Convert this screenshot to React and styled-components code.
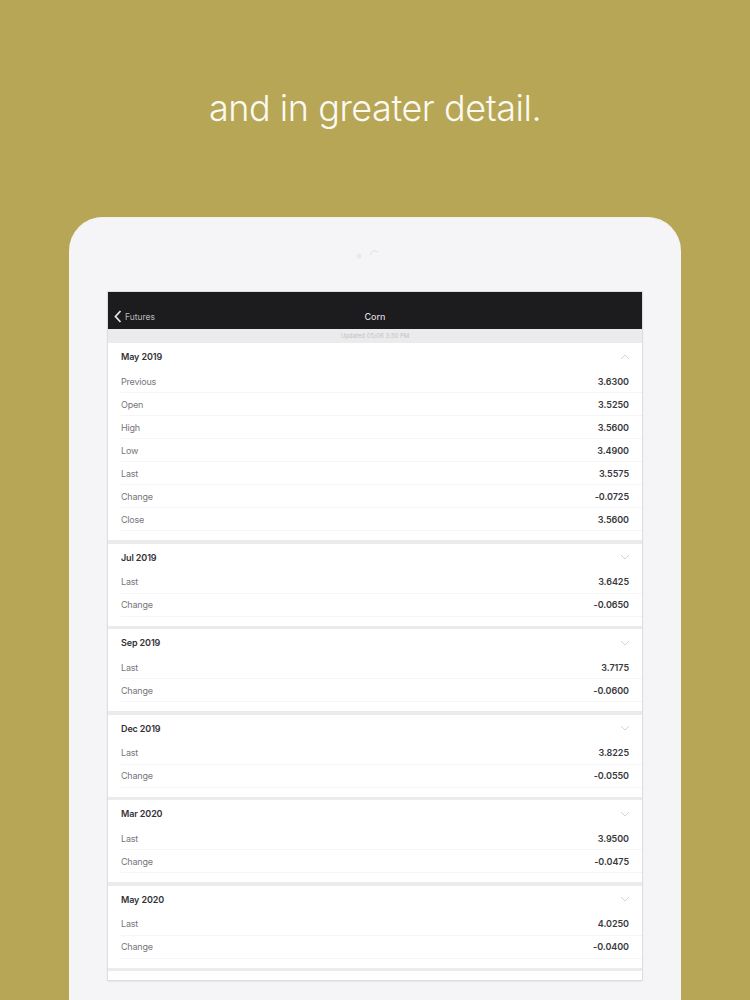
import React from 'react';
import styled, { createGlobalStyle } from 'styled-components';

const GlobalStyle = createGlobalStyle`
  html, body {
    margin: 0;
    padding: 0;
    height: 1000px;
    overflow: hidden;
    background: #b7a656;
    font-family: Inter, "Liberation Sans", sans-serif;
  }
`;

const Page = styled.div`
  height: 1000px;
  display: flex;
  flex-direction: column;
  align-items: center;
  overflow: hidden;
`;

const Headline = styled.h1`
  margin: 0;
  height: 217px;
  padding-top: 85px;
  box-sizing: border-box;
  font-size: 36px;
  line-height: 46px;
  font-weight: 300;
  letter-spacing: -0.45px;
  color: #fbfaf2;
`;

const Tablet = styled.div`
  width: 612px;
  height: 783px;
  box-sizing: border-box;
  padding: 75px 39px 20px;
  background: #f5f4f6;
  border-radius: 34px 34px 0 0;
  box-shadow: inset 0 1px 0 #f1efe6;
  display: flex;
  flex-direction: column;
  position: relative;
`;

const Camera = styled.svg`
  position: absolute;
  left: 285px;
  top: 32px;
`;

const Screen = styled.div`
  flex: 1;
  background: #ebeaec;
  box-shadow: 0 0 0 1px #dddcdf, 0 1px 2px #d4d3d6;
  display: flex;
  flex-direction: column;
  overflow: hidden;
`;

const NavBar = styled.div`
  height: 37px;
  flex: none;
  box-sizing: border-box;
  padding-top: 12px;
  background: #1c1b1e;
  display: grid;
  grid-template-columns: 1fr auto 1fr;
  align-items: center;
  color: #d8d7da;
  font-size: 8.5px;
  line-height: 14px;
`;

const BackLink = styled.div`
  display: flex;
  align-items: center;
  gap: 3px;
  padding-left: 6px;
  color: #b9b8bb;
`;

const NavTitle = styled.div`
  font-size: 9px;
  font-weight: 500;
  color: #d8d7da;
`;

const UpdatedBar = styled.div`
  height: 14px;
  flex: none;
  text-align: center;
  font-size: 6px;
  line-height: 14px;
  color: #c3c2c5;
`;

const SectionList = styled.div`
  display: flex;
  flex-direction: column;
  gap: 3.5px;
`;

const Section = styled.section`
  background: #fff;
  padding-bottom: 9px;
`;

const SectionHeader = styled.div`
  height: 27px;
  box-sizing: border-box;
  padding: 0 12px 0 13px;
  display: flex;
  justify-content: space-between;
  align-items: center;
  font-size: 9px;
  letter-spacing: -0.12px;
  font-weight: 600;
  color: #333236;
`;

const Row = styled.div`
  height: 23px;
  box-sizing: border-box;
  margin-left: 13px;
  padding-right: 13px;
  display: flex;
  justify-content: space-between;
  align-items: center;
  font-size: 9px;
  letter-spacing: -0.2px;
  color: #77767a;
  border-bottom: 1px solid #f5f4f6;
`;

const Value = styled.span`
  letter-spacing: -0.05px;
  font-weight: 600;
  color: #3a393d;
`;

const Chevron = ({ up }) => (
  <svg width="10" height="6" viewBox="0 0 10 6" fill="none">
    <path
      d={up ? 'M1 5l4-4 4 4' : 'M1 1l4 4 4-4'}
      stroke="#d5d4d7"
      strokeWidth="1"
    />
  </svg>
);

const sections = [
  {
    title: 'May 2019',
    open: true,
    rows: [
      ['Previous', '3.6300'],
      ['Open', '3.5250'],
      ['High', '3.5600'],
      ['Low', '3.4900'],
      ['Last', '3.5575'],
      ['Change', '-0.0725'],
      ['Close', '3.5600'],
    ],
  },
  { title: 'Jul 2019', rows: [['Last', '3.6425'], ['Change', '-0.0650']] },
  { title: 'Sep 2019', rows: [['Last', '3.7175'], ['Change', '-0.0600']] },
  { title: 'Dec 2019', rows: [['Last', '3.8225'], ['Change', '-0.0550']] },
  { title: 'Mar 2020', rows: [['Last', '3.9500'], ['Change', '-0.0475']] },
  { title: 'May 2020', rows: [['Last', '4.0250'], ['Change', '-0.0400']] },
];

const App = () => (
  <Page>
    <GlobalStyle />
    <Headline>and in greater detail.</Headline>
    <Tablet>
      <Camera width="30" height="14" viewBox="0 0 30 14" fill="none">
        <circle cx="5" cy="7" r="2.5" fill="#e9e8ea" />
        <path d="M16 6a5 5 0 0 1 8-3" stroke="#dfdee1" strokeWidth="1" />
      </Camera>
      <Screen>
        <NavBar>
          <BackLink>
            <svg width="8" height="13" viewBox="0 0 8 13" fill="none">
              <path d="M6.5 1L1.5 6.5l5 5.5" stroke="#e6e5e8" strokeWidth="1.8" />
            </svg>
            Futures
          </BackLink>
          <NavTitle>Corn</NavTitle>
        </NavBar>
        <UpdatedBar>Updated 05/06 3:50 PM</UpdatedBar>
        <SectionList>
          {sections.map((section) => (
            <Section key={section.title}>
              <SectionHeader>
                {section.title}
                <Chevron up={section.open} />
              </SectionHeader>
              {section.rows.map(([label, value]) => (
                <Row key={label}>
                  {label}
                  <Value>{value}</Value>
                </Row>
              ))}
            </Section>
          ))}
          <Section />
          <Section />
        </SectionList>
      </Screen>
    </Tablet>
  </Page>
);

export default App;
